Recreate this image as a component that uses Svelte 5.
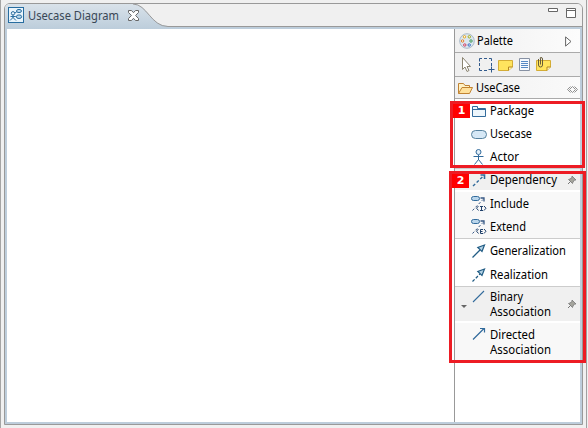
<script>
  const rows = [
    { label: 'Package', icon: 'package', h: 23, w: 44 },
    { label: 'Usecase', icon: 'usecase', h: 23, w: 42 },
    { label: 'Actor', icon: 'actor', h: 23, w: 29 },
    { label: 'Dependency', icon: 'dependency', h: 22, w: 67, tone: 'head', pin: true },
    { label: 'Include', icon: 'include', h: 26, w: 39, tone: 'soft gap' },
    { label: 'Extend', icon: 'extend', h: 22, w: 36, tone: 'soft' },
    { label: 'Generalization', icon: 'general', h: 25, w: 76, tone: 'line' },
    { label: 'Realization', icon: 'real', h: 23, w: 58 },
    { label: 'Binary\nAssociation', icon: 'binary', h: 35, w: 61, tone: 'head line tall', pin: true, arrow: true },
    { label: 'Directed\nAssociation', icon: 'directed', h: 40, w: 61, tone: 'soft gap tall low' }
  ];
</script>

{#snippet pin()}
  <svg class="pin" width="10" height="10" viewBox="0 0 10 10">
    <path d="M1 9 4 6" stroke="#777" />
    <path d="M1.5 4.5 3 4 5 2.5 5 1 9 5 7.5 5 6 7 5.5 8.5Z" fill="#a5a59d" stroke="#777" stroke-width=".8" />
  </svg>
{/snippet}

{#snippet glyph(name)}
  <svg class="glyph" width="18" height="18" viewBox="0 0 18 18" fill="none" stroke="#326b9c">
    {#if name === 'package'}
      <path d="M2.5 14.5V4.5H7.5V6.5H15.5V14.5Z" fill="#edf6fc" /><path d="M2 7.5H15" />
    {:else if name === 'usecase'}
      <rect x="1.5" y="5.5" width="15" height="8" rx="4" fill="#d6e8f6" stroke="#56829f" />
    {:else if name === 'actor'}
      <circle cx="8.5" cy="4" r="2.5" fill="#e4f0f9" /><path d="M3.5 8.5H13.5M8.5 7V12M8.5 11.5 4.5 16.5M8.5 11.5 12.5 16.5" />
    {:else if name === 'dependency'}
      <path d="M3 15 14 4.5" stroke-width="1.4" stroke-dasharray="3 2" /><path d="M10.5 4H14.5V8" stroke-width="1.6" />
    {:else if name === 'include' || name === 'extend'}
      <rect x="1.5" y="1.5" width="8" height="4" rx="2" fill="#b9d5eb" />
      <path d="M2.5 15.5 13 4.5" stroke="#345582" stroke-dasharray="2.5 2" /><path d="M10.5 3H14V6.5" stroke="#345582" stroke-width="1.3" />
      <path d="M8.5 11 6.5 13.2 8.5 15.5M14 11 16 13.2 14 15.5" stroke="#20416b" />
      {#if name === 'include'}<path d="M10 11.5H13M11.5 11.5V15.5M10 15.5H13" stroke="#20416b" />
      {:else}<path d="M13 11.5H10.5V15.5H13M10.5 13.5H12.5" stroke="#20416b" />{/if}
    {:else if name === 'general' || name === 'real'}
      <path d="M2.5 15.5 10 8" stroke="#215c84" stroke-width="1.3" stroke-dasharray={name === 'real' ? '3 1.7' : null} />
      <path d="M14.5 3 7.8 5.5 12 9.5Z" fill="#b4d2e5" stroke="#215c84" stroke-width="1.2" />
    {:else if name === 'binary'}
      <path d="M3 14 14 3" stroke-width="1.1" />
    {:else}
      <path d="M3 14.5 14 3.5M10 3.5H14.5V7.5" stroke-width="1.2" />
    {/if}
  </svg>
{/snippet}

<div class="screen">
  <div class="window">
    <header>
      <svg class="tab" width="175" height="25" viewBox="0 0 175 25">
        <defs><linearGradient id="tabfill" x2="0" y2="1"><stop stop-color="#d9e2ea" /><stop offset="1" stop-color="#bccddb" /></linearGradient></defs>
        <path d="M0 25V4Q0 0 4 0H129C142 0 146 22 163 22H175V25Z" fill="url(#tabfill)" />
        <path d="M128 0C142 0 146 22.5 163 22.5H175" fill="none" stroke="#999" />
      </svg>
      <div class="title">
        <svg width="16" height="16" viewBox="0 0 16 16" fill="none" stroke="#286da0">
          <rect x=".5" y=".5" width="15" height="15" fill="#e9f4fb" />
          <circle cx="5" cy="6.3" r="1.7" /><path d="M2 13.5 5 10.5 8 13.5M2.5 9.5H7.5M5 8V11M7 6 9 4.5M7.5 9.5H9" />
          <ellipse cx="11" cy="4" rx="2.5" ry="1.6" fill="#bad8eb" /><ellipse cx="11" cy="9.7" rx="2.7" ry="1.8" fill="#bad8eb" />
        </svg>
        <svg class="name" width="96" height="18"><text x="0" y="13" textLength="91" lengthAdjust="spacingAndGlyphs">Usecase Diagram</text></svg>
        <svg class="close" width="11" height="11" viewBox="0 0 11 11"><path d="M.5 .5H3.5L5.5 2.7 7.5 .5H10.5V2.5L7.6 5.5 10.5 8.5V10.5H7.5L5.5 8.3 3.5 10.5H.5V8.5L3.4 5.5 .5 2.5Z" fill="#fff" stroke="#666" /></svg>
      </div>
      <svg class="controls" width="29" height="12" viewBox="0 0 29 12" fill="#fff" stroke="#666"><path d="M.5 1.5H9.5V4.5H.5ZM18.5 1.5H27.5V10.5H18.5ZM18 3.5H28" /></svg>
    </header>

    <div class="body">
      <main></main>
      <aside>
        <div class="palette">
          <svg width="16" height="16" viewBox="0 0 16 16" fill="#fff">
            <circle cx="8" cy="8" r="7.3" fill="#dce7f0" stroke="#a9bac8" />
            <circle cx="5.5" cy="3.8" r="1.2" stroke="#e5a515" /><circle cx="10.3" cy="3.8" r="1.2" stroke="#9ba718" />
            <circle cx="3.6" cy="8" r="1.2" stroke="#e07c21" /><circle cx="12" cy="8" r="1.2" stroke="#359353" />
            <circle cx="5.8" cy="12" r="1.2" stroke="#c8355b" /><circle cx="10.2" cy="12" r="1.2" stroke="#326ac0" />
          </svg>
          <svg class="label" width="40" height="18"><text x="0" y="13" textLength="36" lengthAdjust="spacingAndGlyphs">Palette</text></svg>
          <svg class="expand" width="7" height="11" viewBox="0 0 7 11"><path d="M.6 .9V10.1L6 5.5Z" fill="#fff" stroke="#666" /></svg>
        </div>
        <div class="tools">
          <svg width="105" height="18" viewBox="0 0 105 18" fill="none">
            <path d="M7.5 1.5V13.5L10 11 12 15.5 14 14.5 12 10.5H15.5Z" fill="#fff" stroke="#8b8572" />
            <path d="M24.5 5.5V2.5H27M29 2.5H32M34 2.5H36.5V5M36.5 7V10M24.5 7V10M24.5 12V14.5H27M29 14.5H32M33.5 13.5H39.5M36.5 10.5V16.5" stroke="#315a8c" />
            <path d="M43.5 4.5H57.5V11L53.5 14.5H43.5Z" fill="#ffe45e" stroke="#d4ad35" /><path d="M53.5 14.5V11H57.5" fill="#fff3a8" stroke="#b48620" />
            <path d="M64.5 2.5H74.5V14.5H64.5Z" fill="#f5f9ff" stroke="#8791a3" /><path d="M66 5.5H73M66 7.5H73M66 9.5H73M66 11.5H73" stroke="#5588c5" />
            <path d="M81.5 4.5H95.5V11L92 14.5H81.5Z" fill="#ffe45e" stroke="#d4ad35" /><path d="M92 14.5V11H95.5" fill="#fff3a8" stroke="#b48620" />
            <path d="M83.5 3V9Q83.5 11 85.5 11T87.5 9V3Q87.5 1.5 86 1.5T85.5 3V8.5" stroke="#665b38" />
          </svg>
        </div>
        <div class="drawer">
          <svg width="17" height="15" viewBox="0 0 17 15"><path d="M1.5 12.5V2.5H6.5L8 4.5H12.5V7" fill="#fff2c5" stroke="#c18332" /><path d="M1.5 12.5 5 6.5H15.5L12.5 12.5Z" fill="#ffe19b" stroke="#c18332" /></svg>
          <svg class="label" width="50" height="18"><text x="0" y="13" textLength="44" lengthAdjust="spacingAndGlyphs">UseCase</text></svg>
          <svg class="diamonds" width="11" height="7" viewBox="0 0 11 7"><path d="M3.5 .5 .5 3.5 3.5 6.5M2.5 3.5 5.5 .5 8.5 3.5 5.5 6.5ZM7.5 .5 10.5 3.5 7.5 6.5" fill="none" stroke="#858585" stroke-width=".9" /></svg>
        </div>
        {#each rows as row}
          <div class="row {row.tone ?? ''}" style:height="{row.h}px">
            <span class="caret">{#if row.arrow}<svg width="6" height="4"><path d="M0 0H6L3 3Z" fill="#666" /></svg>{/if}</span>
            <span class="icon">{@render glyph(row.icon)}</span>
            <svg class="label" width="82" height={row.label.includes('\n') ? 33 : 18}>
              {#each row.label.split('\n') as part, i}
                <text x="0" y={13 + i * 15} textLength={part === 'Binary' ? 33 : part === 'Directed' ? 45 : row.w} lengthAdjust="spacingAndGlyphs">{part}</text>
              {/each}
            </svg>
            {#if row.pin}{@render pin()}{/if}
          </div>
        {/each}
      </aside>
    </div>
  </div>
  <div class="mark first"><b>1</b></div>
  <div class="mark second"><b>2</b></div>
</div>

<style>
  .screen { position: relative; box-sizing: border-box; width: 588px; height: 428px; padding: 3px 4px 3px 3px; background: #f0f0f0; border-left: 1px solid #a5a5a5; border-right: 1px solid #f0f0f0; font: 12px "Noto Sans", "Open Sans", sans-serif; overflow: hidden; box-shadow: inset -1px 0 #a0a0a0; }
  .window { box-sizing: border-box; width: 579px; height: 422px; border: 1px solid #999; border-radius: 6px 6px 0 0; overflow: hidden; }
  svg { display: block; flex: none; overflow: visible; }
  text { fill: #000; font: 12px "Noto Sans", "Open Sans", sans-serif; }
  header { display: flex; position: relative; height: 25px; background: linear-gradient(#f0f0f0 22px, #999 22px 23px, #bdcddb 23px); }
  .tab { position: absolute; left: 0; top: 0; }
  .title { position: relative; display: flex; padding: 3px 0 0 3px; height: 18px; }
  .title text { fill: #394756; }
  .name { margin-left: 4px; }
  .close { margin: 3px 0 0 4px; }
  .controls { margin: 3px 5px 0 auto; }
  .body { display: flex; height: 393px; border: 2px solid #bdcddb; border-top: 0; background: #fff; }
  main { flex: 1; }
  aside { box-sizing: border-box; width: 126px; border-left: 1px solid #999; }
  .palette, .tools, .drawer { box-sizing: border-box; display: flex; border-bottom: 1px solid #aaa; background: #f0f0f0; }
  .palette { height: 24px; padding: 4px 8px 0 4px; background: linear-gradient(90deg, #f0f0f0, #fcfcfc); }
  .palette .label { margin-left: 2px; margin-top: -1px; }
  .expand { margin: 3px 0 0 auto; }
  .tools { height: 24px; padding-top: 3px; }
  .drawer { height: 22px; padding: 4px 2px 0 2px; background: linear-gradient(90deg, #f0f0f0, #fafafa); }
  .drawer .label { margin: -2px 0 0 2px; }
  .diamonds { margin: 5px 0 0 auto; }
  .row { box-sizing: border-box; display: flex; align-items: center; }
  .head { background: #f0f0f0; border-top: 1px solid #ccc; }
  .soft { background: #f8f8f8; }
  .line { border-top: 1px solid #ccc; }
  .gap { border-top: 2px solid #fff; }
  .caret { display: flex; width: 15px; padding: 0 0 0 6px; box-sizing: border-box; }
  .tall .caret { padding-top: 5px; }
  .icon { width: 20px; }
  .tall .icon { align-self: flex-start; margin-top: 1px; }
  .low .icon { margin-top: 2px; }
  .pin { margin-left: -5px; }
  .mark { position: absolute; box-sizing: border-box; border: 3px solid #ed1c24; }
  .first { left: 449px; top: 101px; width: 135px; height: 67px; }
  .second { left: 448px; top: 171px; width: 137px; height: 192px; }
  b { display: block; width: 17px; height: 14px; background: #f00; color: #fff; font: bold 11px/14px "DejaVu Sans", sans-serif; text-align: center; }
</style>
